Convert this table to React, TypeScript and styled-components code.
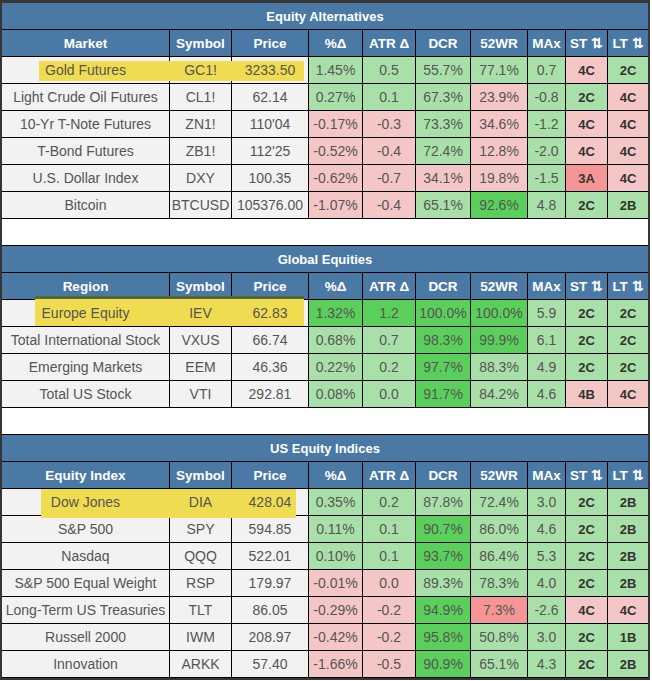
import React from "react";
import styled, { createGlobalStyle } from "styled-components";

const GlobalStyle = createGlobalStyle`
  html, body { margin: 0; padding: 0; background: #ffffff; }
  body { font-family: "Liberation Sans", Arial, sans-serif; }
`;

type Tone = "base" | "g" | "bg" | "p" | "r";

const toneBg: Record<Tone, string> = {
  base: "#f2f2f2",
  g: "#a9e0a9",
  bg: "#5bcf5b",
  p: "#f4c6c6",
  r: "#f59595",
};

const COLS = "168px 62px 77px 54px 53px 55px 57px 38px 42px 40px";

const Frame = styled.div`
  position: relative;
  width: 650px;
  box-sizing: border-box;
  border-style: solid;
  border-color: #363636;
  border-width: 3px 2px 2px 2px;
  background: #ffffff;
`;

const TitleBar = styled.div`
  height: 27px;
  box-sizing: border-box;
  background: #4b79a5;
  border-bottom: 1px solid #000;
  color: #ffffff;
  font-weight: 700;
  font-size: 13px;
  display: flex;
  align-items: center;
  justify-content: center;
`;

const Row = styled.div`
  display: grid;
  grid-template-columns: ${COLS};
  height: 27px;
`;

const HeadCell = styled.div<{ $last?: boolean }>`
  box-sizing: border-box;
  background: #4b79a5;
  color: #ffffff;
  font-weight: 700;
  font-size: 13.5px;
  border-bottom: 1px solid #000;
  border-right: ${(p) => (p.$last ? "none" : "1px solid #000")};
  display: flex;
  align-items: center;
  justify-content: center;
  white-space: nowrap;
`;

const Cell = styled.div<{ $tone: Tone; $last?: boolean; $code?: boolean }>`
  box-sizing: border-box;
  background: ${(p) => toneBg[p.$tone]};
  color: ${(p) => (p.$code ? "#333333" : "#555555")};
  font-weight: ${(p) => (p.$code ? 700 : 400)};
  font-size: ${(p) => (p.$code ? "13px" : "14px")};
  border-bottom: 1px solid #000;
  border-right: ${(p) => (p.$last ? "none" : "1px solid #000")};
  display: flex;
  align-items: center;
  justify-content: center;
  white-space: nowrap;
`;

const CellText = styled.span`
  position: relative;
  z-index: 2;
`;

const Spacer = styled.div`
  height: 27px;
  box-sizing: border-box;
  background: #ffffff;
  border-bottom: 1px solid #000;
`;

const Highlight = styled.div<{ $edge?: boolean }>`
  position: absolute;
  z-index: 1;
  background: #f0dc50;
  box-sizing: border-box;
  border-top: ${(p) => (p.$edge ? "3px solid #55683a" : "none")};
`;

type DataRow = [string, string, string, [string, Tone], [string, Tone], [string, Tone], [string, Tone], [string, Tone], [string, Tone], [string, Tone]];

interface Section {
  title: string;
  first: string;
  rows: DataRow[];
}

const sections: Section[] = [
  {
    title: "Equity Alternatives",
    first: "Market",
    rows: [
      ["Gold Futures", "GC1!", "3233.50", ["1.45%", "g"], ["0.5", "g"], ["55.7%", "g"], ["77.1%", "g"], ["0.7", "g"], ["4C", "p"], ["2C", "g"]],
      ["Light Crude Oil Futures", "CL1!", "62.14", ["0.27%", "g"], ["0.1", "g"], ["67.3%", "g"], ["23.9%", "p"], ["-0.8", "g"], ["2C", "g"], ["4C", "p"]],
      ["10-Yr T-Note Futures", "ZN1!", "110'04", ["-0.17%", "p"], ["-0.3", "p"], ["73.3%", "g"], ["34.6%", "p"], ["-1.2", "g"], ["4C", "p"], ["4C", "p"]],
      ["T-Bond Futures", "ZB1!", "112'25", ["-0.52%", "p"], ["-0.4", "p"], ["72.4%", "g"], ["12.8%", "p"], ["-2.0", "g"], ["4C", "p"], ["4C", "p"]],
      ["U.S. Dollar Index", "DXY", "100.35", ["-0.62%", "p"], ["-0.7", "p"], ["34.1%", "p"], ["19.8%", "p"], ["-1.5", "g"], ["3A", "r"], ["4C", "p"]],
      ["Bitcoin", "BTCUSD", "105376.00", ["-1.07%", "p"], ["-0.4", "p"], ["65.1%", "g"], ["92.6%", "bg"], ["4.8", "g"], ["2C", "g"], ["2B", "g"]],
    ],
  },
  {
    title: "Global Equities",
    first: "Region",
    rows: [
      ["Europe Equity", "IEV", "62.83", ["1.32%", "bg"], ["1.2", "bg"], ["100.0%", "bg"], ["100.0%", "bg"], ["5.9", "g"], ["2C", "g"], ["2C", "g"]],
      ["Total International Stock", "VXUS", "66.74", ["0.68%", "g"], ["0.7", "g"], ["98.3%", "bg"], ["99.9%", "bg"], ["6.1", "g"], ["2C", "g"], ["2C", "g"]],
      ["Emerging Markets", "EEM", "46.36", ["0.22%", "g"], ["0.2", "g"], ["97.7%", "bg"], ["88.3%", "g"], ["4.9", "g"], ["2C", "g"], ["2C", "g"]],
      ["Total US Stock", "VTI", "292.81", ["0.08%", "g"], ["0.0", "g"], ["91.7%", "bg"], ["84.2%", "g"], ["4.6", "g"], ["4B", "p"], ["4C", "p"]],
    ],
  },
  {
    title: "US Equity Indices",
    first: "Equity Index",
    rows: [
      ["Dow Jones", "DIA", "428.04", ["0.35%", "g"], ["0.2", "g"], ["87.8%", "g"], ["72.4%", "g"], ["3.0", "g"], ["2C", "g"], ["2B", "g"]],
      ["S&P 500", "SPY", "594.85", ["0.11%", "g"], ["0.1", "g"], ["90.7%", "bg"], ["86.0%", "g"], ["4.6", "g"], ["2C", "g"], ["2B", "g"]],
      ["Nasdaq", "QQQ", "522.01", ["0.10%", "g"], ["0.1", "g"], ["93.7%", "bg"], ["86.4%", "g"], ["5.3", "g"], ["2C", "g"], ["2B", "g"]],
      ["S&P 500 Equal Weight", "RSP", "179.97", ["-0.01%", "p"], ["0.0", "p"], ["89.3%", "g"], ["78.3%", "g"], ["4.0", "g"], ["2C", "g"], ["2B", "g"]],
      ["Long-Term US Treasuries", "TLT", "86.05", ["-0.29%", "p"], ["-0.2", "p"], ["94.9%", "bg"], ["7.3%", "r"], ["-2.6", "g"], ["4C", "p"], ["4C", "p"]],
      ["Russell 2000", "IWM", "208.97", ["-0.42%", "p"], ["-0.2", "p"], ["95.8%", "bg"], ["50.8%", "g"], ["3.0", "g"], ["2C", "g"], ["1B", "g"]],
      ["Innovation", "ARKK", "57.40", ["-1.66%", "p"], ["-0.5", "p"], ["90.9%", "bg"], ["65.1%", "g"], ["4.3", "g"], ["2C", "g"], ["2B", "g"]],
    ],
  },
];

const headers = ["Symbol", "Price", "%\u0394", "ATR \u0394", "DCR", "52WR", "MAx", "ST \u21C5", "LT \u21C5"];

const highlights = [
  { left: 37, top: 58, width: 265, height: 20, edge: false },
  { left: 33, top: 293, width: 269, height: 30, edge: true },
  { left: 39, top: 486, width: 255, height: 29, edge: false },
];

function SectionBlock({ section, last }: { section: Section; last: boolean }) {
  return (
    <>
      <TitleBar>{section.title}</TitleBar>
      <Row>
        <HeadCell>{section.first}</HeadCell>
        {headers.map((h, i) => (
          <HeadCell key={h} $last={i === headers.length - 1}>
            {h}
          </HeadCell>
        ))}
      </Row>
      {section.rows.map((r) => (
        <Row key={r[0]}>
          <Cell $tone="base"><CellText>{r[0]}</CellText></Cell>
          <Cell $tone="base"><CellText>{r[1]}</CellText></Cell>
          <Cell $tone="base"><CellText>{r[2]}</CellText></Cell>
          {(r.slice(3) as [string, Tone][]).map(([v, t], i) => (
            <Cell key={i} $tone={t} $code={i >= 5} $last={i === 6}>
              <CellText>{v}</CellText>
            </Cell>
          ))}
        </Row>
      ))}
      {!last && <Spacer />}
    </>
  );
}

export default function App() {
  return (
    <>
      <GlobalStyle />
      <Frame>
        {sections.map((s, i) => (
          <SectionBlock key={s.title} section={s} last={i === sections.length - 1} />
        ))}
        {highlights.map((h, i) => (
          <Highlight
            key={i}
            $edge={h.edge}
            style={{ left: h.left, top: h.top, width: h.width, height: h.height }}
          />
        ))}
      </Frame>
    </>
  );
}
